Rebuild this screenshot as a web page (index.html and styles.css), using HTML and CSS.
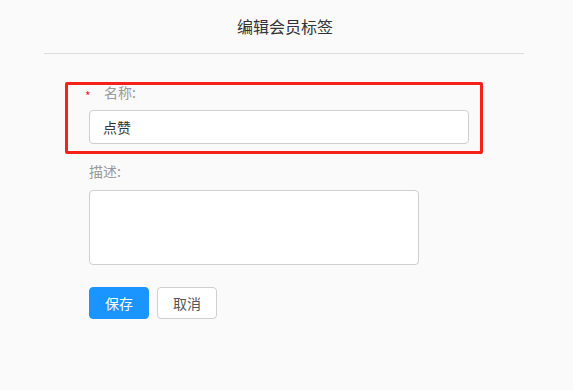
FILE: index.html
```html
<!DOCTYPE html>
<html lang="zh-CN">
<head>
<meta charset="utf-8">
<title>编辑会员标签</title>
<link rel="stylesheet" href="styles.css">
</head>
<body>
<div class="page">
  <header class="header">
    <h1 class="title">编辑会员标签</h1>
  </header>
  <form class="form">
    <div class="item item-name">
      <div class="label-row">
        <span class="req">*</span>
        <label class="label">名称:</label>
      </div>
      <input class="input" type="text" value="点赞">
    </div>
    <div class="item item-desc">
      <div class="label-row plain">
        <label class="label">描述:</label>
      </div>
      <textarea class="textarea"></textarea>
    </div>
    <div class="actions">
      <button type="button" class="btn btn-primary">保存</button>
      <button type="button" class="btn btn-default">取消</button>
    </div>
    <div class="highlight"></div>
  </form>
</div>
</body>
</html>
```
FILE: styles.css
```css
* { box-sizing: border-box; }
html, body {
  margin: 0;
  padding: 0;
  background: #fafafa;
  font-family: "Noto Sans CJK SC", "Noto Sans", sans-serif;
}
.page {
  width: 573px;
  height: 390px;
  position: relative;
}
.header {
  margin: 0 49px 0 44px;
  height: 54px;
  border-bottom: 1px solid #dcdcdc;
  display: flex;
  justify-content: center;
  padding-top: 15px;
}
.title {
  margin: 0 0 0 2px;
  font-size: 16px;
  font-weight: normal;
  line-height: 22px;
  color: #333;
}
.form {
  position: relative;
  padding: 29px 0 0 89px;
}
.item {
  display: flex;
  flex-direction: column;
}
.label-row {
  display: flex;
  align-items: center;
  height: 18px;
  margin-left: -4px;
}
.label-row.plain { margin-left: 0; }
.req {
  color: #f5222d;
  font-size: 12px;
  width: 19px;
  padding-top: 8px;
  line-height: 10px;
}
.label {
  font-size: 14px;
  line-height: 18px;
  color: #999;
}
.input {
  margin-top: 9px;
  width: 380px;
  height: 34px;
  border: 1px solid #cfcfcf;
  border-radius: 4px;
  background: #fff;
  padding: 0 13px;
  font-family: inherit;
  font-size: 14px;
  color: #333;
  outline: none;
}
.item-desc { margin-top: 18px; }
.textarea {
  margin-top: 10px;
  width: 330px;
  height: 75px;
  border: 1px solid #cfcfcf;
  border-radius: 4px;
  background: #fff;
  resize: none;
  outline: none;
  font-family: inherit;
}
.actions {
  margin-top: 22px;
  display: flex;
  gap: 8px;
}
.btn {
  width: 60px;
  height: 32px;
  border-radius: 4px;
  font-family: inherit;
  font-size: 14px;
  padding: 0;
  cursor: pointer;
}
.btn-primary {
  background: #1a94fe;
  border: 1px solid #1a94fe;
  color: #fff;
}
.btn-default {
  background: #fff;
  border: 1px solid #cfcfcf;
  color: #555;
}
.highlight {
  position: absolute;
  left: 65px;
  top: 28px;
  width: 418px;
  height: 72px;
  border: 3px solid #f5211b;
  border-radius: 2px;
  pointer-events: none;
}
```
